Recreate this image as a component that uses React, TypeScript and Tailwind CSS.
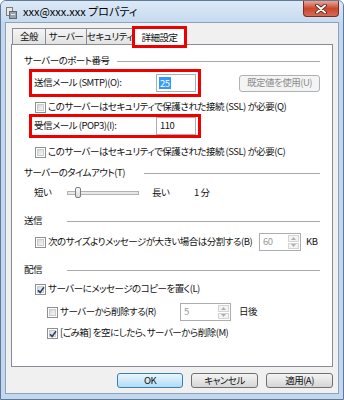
import React from 'react';

const font = "font-['Noto_Sans_CJK_JP',sans-serif] [font-feature-settings:'palt']";

const CheckBox = ({ checked = false }: { checked?: boolean }) => (
  <span className="relative flex h-[11px] w-[11px] shrink-0 items-center justify-center border border-[#8e8f8f] bg-white">
    <span className="h-[7px] w-[7px] border border-[#c9cbcd] bg-gradient-to-br from-[#d4d7da] to-[#f7f7f7]" />
    {checked && (
      <svg className="absolute left-[1px] top-[1px]" width="8" height="8" viewBox="0 0 8 8">
        <path d="M1 4.2 L3.1 6.4 L7 1.2" fill="none" stroke="#2a4170" strokeWidth="1.6" />
      </svg>
    )}
  </span>
);

const CheckRow = ({ checked, label, className = '' }: { checked?: boolean; label: string; className?: string }) => (
  <div className={`flex h-[14px] items-center gap-[2px] ${className}`}>
    <CheckBox checked={checked} />
    <span className="whitespace-nowrap leading-none">{label}</span>
  </div>
);

const Header = ({ label, w, className = '' }: { label: string; w: string; className?: string }) => (
  <div className={`flex h-[14px] items-center ${className}`}>
    <span className={`${w} shrink-0 whitespace-nowrap leading-none`}>{label}</span>
    <span className="h-px flex-1 bg-[#a9a9a9]" />
  </div>
);

const Spin = ({ value, w }: { value: string; w: string }) => (
  <div className={`flex h-[18px] ${w} shrink-0 items-stretch border border-[#abadb3] bg-white`}>
    <span className="flex flex-1 items-center pl-[3px] leading-none text-[#9a9a9a]">{value}</span>
    <div className="flex w-[13px] flex-col gap-px p-px">
      <span className="flex flex-1 items-center justify-center border border-[#d4d4d4] bg-[#f4f4f4]">
        <svg width="5" height="3" viewBox="0 0 5 3"><path d="M0 3 L2.5 0 L5 3Z" fill="#b0b0b0" /></svg>
      </span>
      <span className="flex flex-1 items-center justify-center border border-[#d4d4d4] bg-[#f4f4f4]">
        <svg width="5" height="3" viewBox="0 0 5 3"><path d="M0 0 L2.5 3 L5 0Z" fill="#b0b0b0" /></svg>
      </span>
    </div>
  </div>
);

export default function App() {
  return (
    <div className={`${font} flex h-[400px] w-[344px] flex-col overflow-hidden rounded-t-[6px] border border-[#5f7a96] bg-[#c3d7ee] text-[9.5px] tracking-[-0.5px] text-[#111]`}>
      {/* title bar */}
      <div className="flex h-[21px] shrink-0 items-start bg-gradient-to-b from-[#dde9f6] to-[#c6daf0]">
        <svg className="ml-[5px] mt-[6px]" width="11" height="12" viewBox="0 0 11 12">
          <rect x="0.5" y="0.5" width="6" height="8" fill="#e8e8e8" stroke="#7d7d7d" />
          <rect x="3.5" y="4.5" width="7" height="7" fill="#9aa3ad" stroke="#5f6770" />
          <rect x="5" y="7" width="4" height="1" fill="#e8ecef" />
        </svg>
        <span className="ml-[6px] mt-[5px] whitespace-nowrap text-[11px] leading-none tracking-normal text-black">xxx@xxx.xxx プロパティ</span>
        <div className="ml-auto mr-[4px] flex h-[16px] w-[36px] items-center justify-center rounded-b-[4px] border border-t-0 border-[#7e2b20] bg-gradient-to-b from-[#e9a596] via-[#c9462f] to-[#d66b52]">
          <svg width="12" height="10" viewBox="0 0 12 10">
            <path d="M2 1.5 L10 8.5 M10 1.5 L2 8.5" stroke="#4d1a12" strokeWidth="3.6" strokeLinecap="round" />
            <path d="M2 1.5 L10 8.5 M10 1.5 L2 8.5" stroke="#ffffff" strokeWidth="2" strokeLinecap="round" />
          </svg>
        </div>
      </div>

      {/* client */}
      <div className="mx-[4px] flex h-[372px] shrink-0 flex-col border border-[#8ca3be] bg-[#f0f0f0] px-[5px]">
        {/* tabs */}
        <div className="ml-px mt-[3px] flex items-end">
          <div className="flex h-[16px] w-[34px] items-center justify-center whitespace-nowrap border border-b-0 border-[#898c95] bg-gradient-to-b from-[#f5f5f5] to-[#e2e2e2]">全般</div>
          <div className="-ml-px flex h-[16px] w-[42px] items-center justify-center whitespace-nowrap border border-b-0 border-[#898c95] bg-gradient-to-b from-[#f5f5f5] to-[#e2e2e2]">サーバー</div>
          <div className="-ml-px flex h-[16px] w-[48px] items-center justify-center whitespace-nowrap border border-b-0 border-[#898c95] bg-gradient-to-b from-[#f5f5f5] to-[#e2e2e2]">セキュリティ</div>
          <div className="relative z-10 -mb-[4px] -ml-[2px] flex h-[22px] w-[55px] items-start justify-center border-[3px] border-[#ee0000] bg-white pt-[2px]">
            <span className="whitespace-nowrap leading-[12px]">詳細設定</span>
          </div>
        </div>

        {/* panel */}
        <div className="flex h-[323px] shrink-0 flex-col border border-[#898c95] bg-white px-[12px]">
          <Header label="サーバーのポート番号" w="w-[93px]" className="mt-[9px]" />

          <div className="mt-px flex items-center">
            <div className="ml-[5px] flex h-[28px] w-[172px] items-center border-[3px] border-[#ee0000] pl-[2px] pr-[2px]">
              <span className="w-[122px] whitespace-nowrap leading-none">送信メール (SMTP)(O):</span>
              <span className="flex h-[18px] w-[40px] items-center border border-[#abadb3] bg-white pl-[2px]">
                <span className="bg-[#3399ff] px-px leading-[12px] text-white">25</span>
              </span>
            </div>
            <div className="ml-[38px] flex h-[17px] w-[84px] items-center justify-center rounded-[3px] border border-[#adb2b5] bg-[#f4f4f4] leading-none text-[#8d8d8d]">
              既定値を使用(U)
            </div>
          </div>

          <CheckRow label="このサーバーはセキュリティで保護された接続 (SSL) が必要(Q)" className="ml-[11px] mt-[3px]" />

          <div className="ml-[5px] flex h-[24px] w-[172px] items-center border-[3px] border-[#ee0000] pl-[2px] pr-[2px]">
            <span className="w-[122px] whitespace-nowrap leading-none">受信メール (POP3)(I):</span>
            <span className="flex h-[18px] w-[40px] items-center border border-[#abadb3] bg-white pl-[3px] leading-none">110</span>
          </div>

          <CheckRow label="このサーバーはセキュリティで保護された接続 (SSL) が必要(C)" className="ml-[11px] mt-[7px]" />

          <Header label="サーバーのタイムアウト(T)" w="w-[120px]" className="mt-[7px]" />

          <div className="mt-[5px] flex h-[16px] items-center">
            <span className="ml-[10px] w-[33px] leading-none">短い</span>
            <div className="relative h-[4px] w-[72px] border border-[#b2b2b2] bg-[#e6e8ea]">
              <span className="absolute left-[7px] top-[-5px] h-[11px] w-[6px] rounded-[2px] border border-[#7d7d7d] bg-gradient-to-b from-[#fbfbfb] to-[#d9d9d9]" />
            </div>
            <span className="ml-[13px] w-[42px] leading-none">長い</span>
            <span className="leading-none">1 分</span>
          </div>

          <Header label="送信" w="w-[43px]" className="mt-[13px]" />

          <div className="mt-[5px] flex h-[18px] items-center">
            <CheckRow label="次のサイズよりメッセージが大きい場合は分割する(B)" className="ml-[11px] w-[224px] shrink-0" />
            <Spin value="60" w="w-[42px]" />
            <span className="ml-[5px] leading-none">KB</span>
          </div>

          <Header label="配信" w="w-[43px]" className="mt-[12px]" />

          <CheckRow checked label="サーバーにメッセージのコピーを置く(L)" className="ml-[11px] mt-[5px]" />

          <div className="mt-[7px] flex h-[18px] items-center">
            <CheckRow label="サーバーから削除する(R)" className="ml-[23px] w-[133px] shrink-0" />
            <Spin value="5" w="w-[51px]" />
            <span className="ml-[8px] leading-none">日後</span>
          </div>

          <CheckRow checked label="[ごみ箱] を空にしたら、サーバーから削除(M)" className="ml-[23px] mt-[5px]" />
        </div>

        {/* buttons */}
        <div className="mt-[6px] flex justify-end gap-[8px]">
          <div className="flex h-[15px] w-[66px] items-center justify-center rounded-[3px] border border-[#3c7fb1] bg-gradient-to-b from-[#eaf6fd] to-[#b0dcf5] leading-none">OK</div>
          <div className="flex h-[15px] w-[67px] items-center justify-center rounded-[3px] border border-[#707070] bg-gradient-to-b from-[#f4f4f4] to-[#d6d6d6] leading-none">キャンセル</div>
          <div className="flex h-[15px] w-[67px] items-center justify-center rounded-[3px] border border-[#707070] bg-gradient-to-b from-[#f4f4f4] to-[#d6d6d6] leading-none">適用(A)</div>
        </div>
      </div>
    </div>
  );
}
